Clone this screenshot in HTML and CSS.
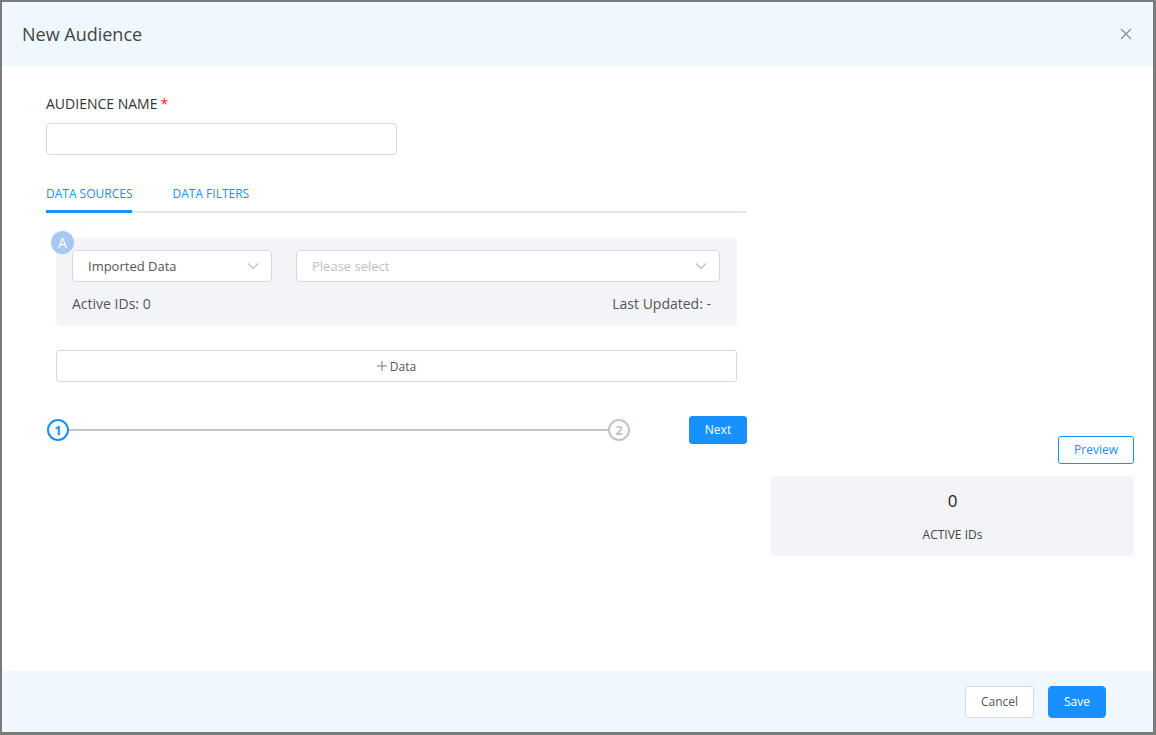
FILE: index.html
```html
<!DOCTYPE html>
<html lang="en">
<head>
    <meta charset="UTF-8">
    <meta name="viewport" content="width=device-width, initial-scale=1.0">
    <title>New Audience</title>
    <link rel="stylesheet" href="styles.css">
</head>
<body>
    <div class="modal">
        <div class="modal-header">
            <span class="modal-title">New Audience</span>
            <svg class="close" width="12" height="12" viewBox="0 0 12 12">
                <path d="M1 1L11 11M11 1L1 11" stroke="#8c8c8c" stroke-width="1.2" fill="none"/>
            </svg>
        </div>
        <div class="modal-body">
            <div class="left-col">
                <div class="field-label">AUDIENCE NAME<span class="required">*</span></div>
                <div class="text-input"></div>

                <div class="tabs">
                    <div class="tab active">DATA SOURCES</div>
                    <div class="tab">DATA FILTERS</div>
                </div>

                <div class="source-card">
                    <div class="badge">A</div>
                    <div class="select-row">
                        <div class="select select-type">
                            <span>Imported Data</span>
                            <svg width="12" height="8" viewBox="0 0 12 8"><path d="M1 1.5L6 6.5L11 1.5" stroke="#bfbfbf" stroke-width="1.2" fill="none"/></svg>
                        </div>
                        <div class="select select-source">
                            <span class="placeholder">Please select</span>
                            <svg width="12" height="8" viewBox="0 0 12 8"><path d="M1 1.5L6 6.5L11 1.5" stroke="#bfbfbf" stroke-width="1.2" fill="none"/></svg>
                        </div>
                    </div>
                    <div class="meta-row">
                        <span>Active IDs: 0</span>
                        <span>Last Updated: -</span>
                    </div>
                </div>

                <div class="add-data">
                    <svg width="10" height="10" viewBox="0 0 10 10"><path d="M5 0V10M0 5H10" stroke="#777" stroke-width="1" fill="none"/></svg>
                    <span>Data</span>
                </div>

                <div class="step-row">
                    <div class="stepper">
                        <div class="step current">1</div>
                        <div class="step-line"></div>
                        <div class="step">2</div>
                    </div>
                    <button class="btn btn-primary btn-small">Next</button>
                </div>
            </div>
            <div class="right-col">
                <button class="btn btn-outline">Preview</button>
                <div class="stat-card">
                    <div class="stat-value">0</div>
                    <div class="stat-label">ACTIVE IDs</div>
                </div>
            </div>
        </div>
        <div class="modal-footer">
            <button class="btn btn-default">Cancel</button>
            <button class="btn btn-primary">Save</button>
        </div>
    </div>
</body>
</html>
```

FILE: styles.css
```css
body {
    margin: 0;
    background: #7a7a7a;
    font-family: "Open Sans", "Noto Sans", sans-serif;
    color: #333;
    overflow: hidden;
}
.modal {
    margin: 2px 0 0 2px;
    width: 1151px;
    height: 730px;
    background: #fff;
    display: flex;
    flex-direction: column;
}
.modal-header {
    height: 64px;
    background: #f0f8ff;
    display: flex;
    align-items: center;
    justify-content: space-between;
    padding: 0 21px 0 20px;
}
.modal-title {
    font-size: 18px;
    color: #444;
}
.modal-body {
    flex: 1;
    display: flex;
    gap: 24px;
    padding: 28px 19px 0 44px;
}
.left-col {
    width: 701px;
    display: flex;
    flex-direction: column;
}
.right-col {
    width: 363px;
    margin-top: 342px;
    display: flex;
    flex-direction: column;
    align-items: flex-end;
}
.field-label {
    font-size: 14px;
    line-height: 20px;
    color: #333;
    margin-bottom: 9px;
}
.required {
    color: #f5222d;
    margin-left: 3px;
}
.text-input {
    width: 349px;
    height: 30px;
    border: 1px solid #d9d9d9;
    border-radius: 4px;
}
.tabs {
    margin-top: 22px;
    display: flex;
    gap: 40px;
    border-bottom: 2px solid #e4e7ed;
}
.tab {
    font-size: 12px;
    line-height: 18px;
    padding: 8px 0 8px;
    color: #1890ff;
    margin-bottom: -2px;
}
.tab.active {
    border-bottom: 3px solid #1890ff;
    padding-bottom: 7px;
}
.source-card {
    position: relative;
    margin: 25px 10px 0;
    background: #f3f4f8;
    border-radius: 4px;
    padding: 12px 17px 12px 16px;
}
.badge {
    position: absolute;
    left: -5px;
    top: -7px;
    width: 23px;
    height: 23px;
    border-radius: 50%;
    background: #a5c9f2;
    color: #fff;
    font-size: 14px;
    line-height: 23px;
    text-align: center;
}
.select-row {
    display: flex;
    gap: 24px;
}
.select {
    height: 30px;
    border: 1px solid #d9d9d9;
    border-radius: 4px;
    background: #fff;
    display: flex;
    align-items: center;
    justify-content: space-between;
    padding: 0 12px 0 15px;
    font-size: 13px;
    color: #555;
}
.select-type {
    width: 171px;
}
.select-source {
    flex: 1;
}
.placeholder {
    color: #bfbfbf;
}
.meta-row {
    margin-top: 12px;
    display: flex;
    justify-content: space-between;
    font-size: 14px;
    line-height: 20px;
    color: #555;
    padding-right: 9px;
}
.add-data {
    margin: 24px 10px 0;
    height: 30px;
    border: 1px solid #d9d9d9;
    border-radius: 3px;
    display: flex;
    align-items: center;
    justify-content: center;
    gap: 3px;
    font-size: 12px;
    color: #555;
}
.step-row {
    margin-top: 34px;
    display: flex;
    align-items: center;
}
.stepper {
    width: 583px;
    margin-left: 1px;
    display: flex;
    align-items: center;
}
.step {
    width: 18px;
    height: 18px;
    border: 2px solid #c0c4cc;
    border-radius: 50%;
    font-size: 13px;
    font-weight: 700;
    line-height: 18px;
    text-align: center;
    color: #c0c4cc;
}
.step.current {
    border-color: #1890ff;
    color: #1890ff;
}
.step-line {
    flex: 1;
    height: 2px;
    background: #c0c4cc;
}
.btn {
    font-family: inherit;
    border-radius: 4px;
    font-size: 12px;
    cursor: pointer;
    padding: 0;
}
.btn-primary {
    background: #1890ff;
    border: 1px solid #1890ff;
    color: #fff;
    width: 58px;
    height: 32px;
}
.btn-small {
    margin-left: auto;
    height: 28px;
    border-radius: 3px;
    padding-bottom: 2px;
}
.btn-outline {
    width: 76px;
    height: 28px;
    background: #fff;
    border: 1px solid #1890ff;
    color: #1890ff;
    border-radius: 3px;
    padding-bottom: 2px;
}
.btn-default {
    width: 69px;
    height: 32px;
    background: #fff;
    border: 1px solid #d9d9d9;
    color: #555;
}
.stat-card {
    margin-top: 12px;
    width: 100%;
    height: 80px;
    background: #f3f4f8;
    border-radius: 4px;
    display: flex;
    flex-direction: column;
    align-items: center;
}
.stat-value {
    margin-top: 13px;
    font-size: 17px;
    line-height: 24px;
    color: #222;
}
.stat-label {
    margin-top: 13px;
    font-size: 12px;
    line-height: 18px;
    color: #444;
}
.modal-footer {
    height: 61px;
    background: #f0f8ff;
    display: flex;
    align-items: center;
    justify-content: flex-end;
    gap: 14px;
    padding-right: 47px;
    margin-top: auto;
}
```
